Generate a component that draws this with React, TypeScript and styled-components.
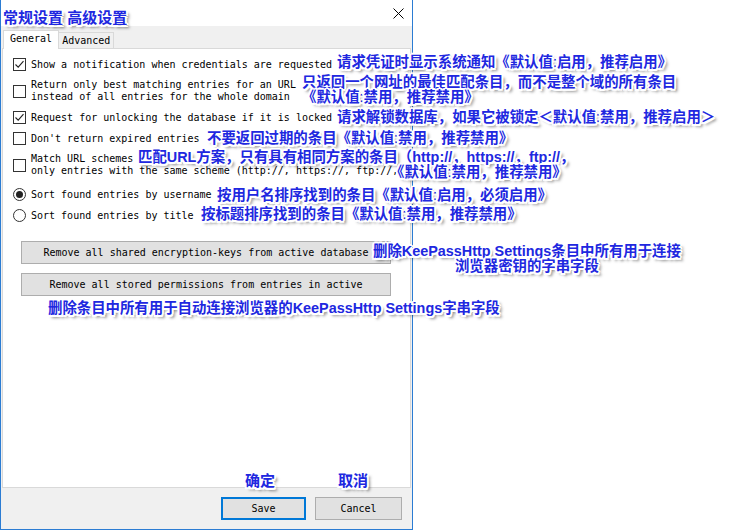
import styled, { createGlobalStyle } from 'styled-components';

const GlobalStyle = createGlobalStyle`
  html, body {
    margin: 0;
    padding: 0;
    background: #fff;
  }
  #root {
    width: 733px;
    height: 530px;
  }
`;

const Stage = styled.div`
  position: relative;
  width: 733px;
  height: 530px;
  overflow: hidden;
  background: #fff;
`;

const Window = styled.div`
  width: 413px;
  height: 530px;
  box-sizing: border-box;
  border: 1px solid #2b7cd3;
  border-top: none;
  background: #f0f0f0;
  display: flex;
  flex-direction: column;
  font-family: 'DejaVu Sans Mono', 'Liberation Mono', monospace;
  font-size: 10px;
  color: #000;
`;

const TitleBar = styled.div`
  height: 26px;
  flex: none;
  background: #fff;
  display: flex;
  align-items: center;
  justify-content: flex-end;
  padding-right: 8px;
`;

const TabArea = styled.div`
  flex: 1;
  display: flex;
  flex-direction: column;
  padding: 4px 1px 0 1px;
`;

const TabStrip = styled.div`
  height: 19px;
  display: flex;
  align-items: flex-end;
  padding-left: 1px;
  margin-bottom: -1px;
  position: relative;
  z-index: 1;
`;

const Tab = styled.div<{ $active?: boolean }>`
  box-sizing: border-box;
  height: ${({ $active }) => ($active ? '19px' : '17px')};
  padding: ${({ $active }) => ($active ? '0 6px' : '0 3px')};
  background: ${({ $active }) => ($active ? '#fff' : '#f0f0f0')};
  border: 1px solid #d9d9d9;
  border-bottom: ${({ $active }) => ($active ? 'none' : '1px solid #d9d9d9')};
  margin-left: ${({ $active }) => ($active ? '0' : '-1px')};
  line-height: ${({ $active }) => ($active ? '16px' : '15px')};
  white-space: nowrap;
`;

const Panel = styled.div`
  flex: 1;
  background: #fff;
  border: 1px solid #d9d9d9;
  padding: 9px 0 0 10px;
  display: flex;
  flex-direction: column;
`;

const OptionList = styled.div`
  display: flex;
  flex-direction: column;
  gap: 8px;
`;

const Option = styled.label<{ $spaced?: boolean }>`
  display: flex;
  align-items: center;
  gap: 5px;
  margin-top: ${({ $spaced }) => ($spaced ? '3px' : '0')};
  line-height: 12px;
  white-space: pre;
`;

const Box = styled.span`
  width: 13px;
  height: 13px;
  box-sizing: border-box;
  border: 1px solid #333;
  background: #fff;
  flex: none;
  display: flex;
  align-items: center;
  justify-content: center;
`;

const Radio = styled.span`
  width: 13px;
  height: 13px;
  box-sizing: border-box;
  border: 1px solid #333;
  border-radius: 50%;
  background: #fff;
  flex: none;
  display: flex;
  align-items: center;
  justify-content: center;
`;

const Dot = styled.span`
  width: 7px;
  height: 7px;
  border-radius: 50%;
  background: #222;
`;

const ActionList = styled.div`
  display: flex;
  flex-direction: column;
  gap: 9px;
  margin: 19px 0 0 8px;
`;

const WideButton = styled.div`
  width: 370px;
  height: 23px;
  box-sizing: border-box;
  background: #e1e1e1;
  border: 1px solid #adadad;
  display: flex;
  align-items: center;
  justify-content: center;
  white-space: pre;
`;

const Footer = styled.div`
  height: 41px;
  flex: none;
  box-sizing: border-box;
  display: flex;
  justify-content: flex-end;
  align-items: flex-start;
  gap: 9px;
  padding: 9px 10px 0 0;
`;

const DialogButton = styled.div<{ $default?: boolean; $w: number }>`
  width: ${({ $w }) => $w}px;
  height: 23px;
  box-sizing: border-box;
  background: #e1e1e1;
  border: ${({ $default }) => ($default ? '2px solid #0078d7' : '1px solid #adadad')};
  display: flex;
  align-items: center;
  justify-content: center;
`;

const Note = styled.div<{ $x: number; $y: number; $size?: number; $center?: boolean }>`
  position: absolute;
  left: ${({ $x }) => $x}px;
  top: ${({ $y }) => $y}px;
  font-family: 'Liberation Sans', 'Noto Sans CJK SC', sans-serif;
  font-size: ${({ $size }) => $size ?? 14.4}px;
  line-height: 15px;
  font-weight: 700;
  color: #2027e0;
  white-space: nowrap;
  text-align: ${({ $center }) => ($center ? 'center' : 'left')};
  text-shadow:
    -2px 0 0 #fff, 2px 0 0 #fff, 0 -2px 0 #fff, 0 2px 0 #fff,
    -1.5px -1.5px 0 #fff, 1.5px -1.5px 0 #fff, -1.5px 1.5px 0 #fff, 1.5px 1.5px 0 #fff,
    3px 3px 3px rgba(0, 0, 0, 0.55);
`;

const Line = styled.span<{ $indent?: number }>`
  display: block;
  padding-left: ${({ $indent }) => $indent ?? 0}px;
`;

const Thin = styled.span`
  font-weight: 400;
`;

function Check({ on }: { on?: boolean }) {
  return (
    <Box>
      {on && (
        <svg width="11" height="11" viewBox="0 0 11 11">
          <path d="M1.5 5.5 L4.2 8.2 L9.5 2.2" fill="none" stroke="#222" strokeWidth="1.1" />
        </svg>
      )}
    </Box>
  );
}

function CloseIcon() {
  return (
    <svg width="11" height="11" viewBox="0 0 11 11">
      <path d="M0.5 0.5 L10.5 10.5 M10.5 0.5 L0.5 10.5" stroke="#000" strokeWidth="1" />
    </svg>
  );
}

export default function App() {
  return (
    <Stage>
      <GlobalStyle />
      <Window>
        <TitleBar>
          <CloseIcon />
        </TitleBar>
        <TabArea>
          <TabStrip>
            <Tab $active>General</Tab>
            <Tab>Advanced</Tab>
          </TabStrip>
          <Panel>
            <OptionList>
              <Option>
                <Check on />
                <span>Show a notification when credentials are requested</span>
              </Option>
              <Option>
                <Check />
                <span>{'Return only best matching entries for an URL\ninstead of all entries for the whole domain'}</span>
              </Option>
              <Option>
                <Check on />
                <span>Request for unlocking the database if it is locked</span>
              </Option>
              <Option>
                <Check />
                <span>Don't return expired entries</span>
              </Option>
              <Option>
                <Check />
                <span>{'Match URL schemes\nonly entries with the same scheme (http://, https://, ftp://,'}</span>
              </Option>
              <Option $spaced>
                <Radio>
                  <Dot />
                </Radio>
                <span>Sort found entries by username</span>
              </Option>
              <Option>
                <Radio />
                <span>Sort found entries by title</span>
              </Option>
            </OptionList>
            <ActionList>
              <WideButton>Remove all shared encryption-keys from active database</WideButton>
              <WideButton>Remove all stored permissions from entries in active</WideButton>
            </ActionList>
          </Panel>
        </TabArea>
        <Footer>
          <DialogButton $default $w={85}>Save</DialogButton>
          <DialogButton $w={87}>Cancel</DialogButton>
        </Footer>
      </Window>

      <Note $x={3} $y={10} $size={15}>常规设置 高级设置</Note>
      <Note $x={337} $y={55}>请求凭证时显示系统通知《默认值<Thin>:</Thin>启用，推荐启用》</Note>
      <Note $x={302} $y={75}>
        <Line>只返回一个网址的最佳匹配条目，而不是整个域的所有条目</Line>
        <Line>《默认值<Thin>:</Thin>禁用，推荐禁用》</Line>
      </Note>
      <Note $x={337} $y={110}>请求解锁数据库，如果它被锁定＜默认值<Thin>:</Thin>禁用，推荐启用＞</Note>
      <Note $x={207} $y={131}>不要返回过期的条目《默认值<Thin>:</Thin>禁用，推荐禁用》</Note>
      <Note $x={138} $y={150}>
        <Line>匹配URL方案，只有具有相同方案的条目（http://，https://，ftp://，</Line>
        <Line $indent={252}>《默认值<Thin>:</Thin>禁用，推荐禁用》</Line>
      </Note>
      <Note $x={217} $y={188}>按用户名排序找到的条目《默认值<Thin>:</Thin>启用，必须启用》</Note>
      <Note $x={201} $y={207}>按标题排序找到的条目《默认值<Thin>:</Thin>禁用，推荐禁用》</Note>
      <Note $x={373} $y={244} $center>
        <Line>删除KeePassHttp Settings条目中所有用于连接</Line>
        <Line>浏览器密钥的字串字段</Line>
      </Note>
      <Note $x={48} $y={301}>删除条目中所有用于自动连接浏览器的KeePassHttp Settings字串字段</Note>
      <Note $x={245} $y={473} $size={15}>确定</Note>
      <Note $x={338} $y={473} $size={15}>取消</Note>
    </Stage>
  );
}
